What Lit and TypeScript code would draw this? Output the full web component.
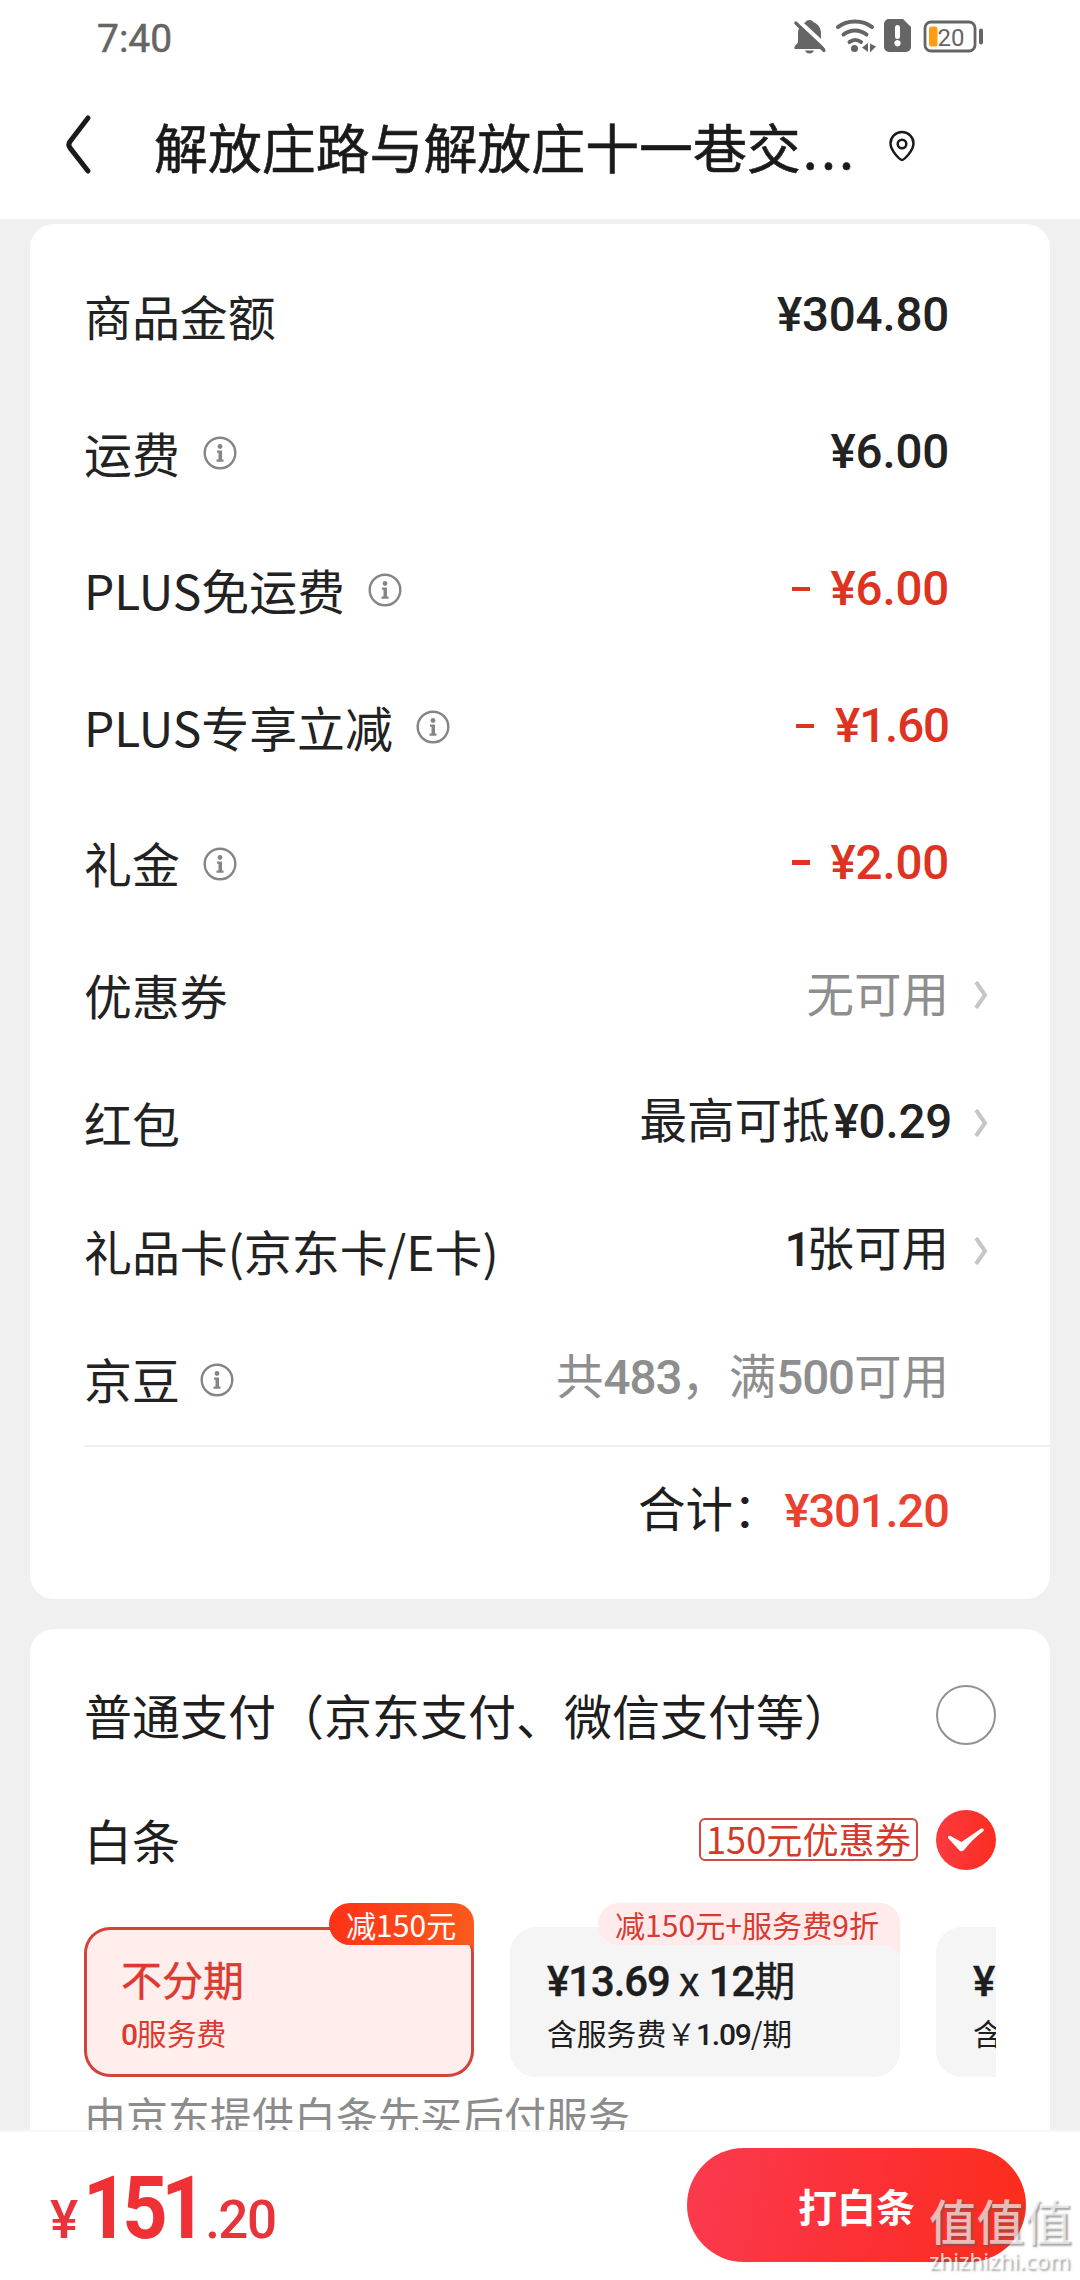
import { LitElement, html, css, svg, nothing, type TemplateResult } from "lit";
import { customElement, property } from "lit/decorators.js";

interface Row {
  label: string;
  info?: boolean;
  value: TemplateResult;
  tone?: string;
  arrow?: boolean;
}

const n = (text: string, fit = "") => html`<span class="num ${fit}">${text}</span>`;

const FEES: Row[] = [
  { label: "商品金额", value: n("¥304.80") },
  { label: "运费", info: true, value: n("¥6.00") },
  { label: "PLUS免运费", info: true, value: html`<span class="minus"></span>${n("¥6.00")}`, tone: "red" },
  { label: "PLUS专享立减", info: true, value: html`<span class="minus"></span>${n("¥1.60", "snug")}`, tone: "red" },
  { label: "礼金", info: true, value: html`<span class="minus"></span>${n("¥2.00")}`, tone: "red" },
];

const ASSETS: Row[] = [
  { label: "优惠券", value: html`无可用`, tone: "gray", arrow: true },
  { label: "红包", value: html`最高可抵${n("¥0.29", "hang")}`, arrow: true },
  { label: "礼品卡(京东卡/E卡)", value: html`${n("1", "tight")}张可用`, arrow: true },
  { label: "京豆", info: true, value: html`共${n("483", "snug")}，满${n("500", "snug")}可用`, tone: "gray" },
];

@customElement("status-bar")
class StatusBar extends LitElement {
  static styles = css`
    :host {
      display: flex;
      justify-content: space-between;
      height: 76px;
      padding: 0 96px 0 97px;
      color: #656565;
      font-family: Roboto, "Noto Sans", sans-serif;
    }
    .time { font-size: 39px; line-height: 78px; -webkit-text-stroke: 0.5px currentColor; }
    .icons { flex: none; margin-top: 17px; }
    .level { font-size: 24px; font-family: Roboto, sans-serif; }
  `;
  render() {
    return html`
      <div class="time">7:40</div>
      <svg class="icons" width="191" height="38" viewBox="793 17 191 38" fill="#656565">
        <path d="M805.500 22.300c.8-1.500 2.300-2.300 4-2.300s3.200.8 4 2.300c4.800 1.700 7.500 6 7.500 11.200V43l4 6H794.500v-2.500l3.500-4v-9c0-5.200 2.700-9.500 7.500-11.200z"/>
        <path d="M805 50.500h9c-.8 2-2.400 3-4.500 3s-3.700-1-4.500-3z"/>
        <path d="M793 16L830 50.500V40z" fill="none"/>
        <path d="M795 17.500L829 49" stroke="#fff" stroke-width="4"/>
        <path d="M795.800 23L824 50.500" stroke="#656565" stroke-width="3.200" stroke-linecap="round"/>
        <g fill="none" stroke="#656565" stroke-width="4" stroke-linecap="round">
          <path d="M838 27c9-7.500 25-7.500 34 0M843.500 34.500c7-5.500 16-5.500 23 0M849.500 42c3.500-2.800 8-2.800 11.500 0"/>
        </g>
        <circle cx="854.500" cy="48.500" r="3.500"/>
        <path d="M868 43v9l-6-4.500zM870 43.500v9l6-6z"/>
        <path fill-rule="evenodd" d="M889 19h14l8 8v20a5 5 0 0 1-5 5h-17a5 5 0 0 1-5-5v-23a5 5 0 0 1 5-5zM895 27.500v9a2.500 2.500 0 0 0 5 0v-9a2.500 2.500 0 0 0-5 0zM897.500 40a3.200 3.200 0 1 0 .01 0z"/>
        <rect x="925" y="22" width="50" height="29" rx="6" fill="none" stroke="#656565" stroke-width="2.800"/>
        <rect x="979" y="28.500" width="4" height="16" rx="2"/>
        <rect x="929" y="26.500" width="8.500" height="20" rx="2.500" fill="#ff9c14"/>
        <text class="level" x="937.500" y="46">20</text>
      </svg>
    `;
  }
}

@customElement("title-bar")
class TitleBar extends LitElement {
  static styles = css`
    :host {
      display: flex;
      align-items: center;
      height: 143px;
      padding-left: 64px;
      box-sizing: border-box;
      color: #1a1a1a;
      font-family: "Noto Sans CJK SC", sans-serif;
    }
    .back { margin-top: -6px; }
    .title { margin: -4px 0 0 62px; width: 698px; font-size: 53.9px; line-height: 80px; white-space: nowrap; -webkit-text-stroke: 0.6px currentColor; }
    .dots { letter-spacing: 3.200px; margin-left: 2px; }
    .pin { margin-top: -4px; margin-left: 36px; }
    .back, .pin { flex: none; }
  `;
  render() {
    return html`
      <svg class="back" width="28" height="62" viewBox="0 0 28 62" fill="none" stroke="#1a1a1a" stroke-width="5" stroke-linecap="round" stroke-linejoin="round">
        <path d="M24 4L6 27.500c-1.600 2.200-1.600 4.200 0 6.400L24 57"/>
      </svg>
      <div class="title">解放庄路与解放庄十一巷交<span class="dots">...</span></div>
      <svg class="pin" width="28" height="32" viewBox="0 0 28 32" fill="none" stroke="#1a1a1a" stroke-width="2.500">
        <path d="M14 30c-1.300 0-11.500-8.500-11.500-16.700a11.500 11.300 0 0 1 23 0C25.500 21.500 15.300 30 14 30z"/>
        <circle cx="14" cy="14" r="4.300"/>
      </svg>
    `;
  }
}

@customElement("bill-row")
class BillRow extends LitElement {
  @property({ attribute: false }) row!: Row;
  static styles = css`
    :host { display: flex; align-items: center; padding-right: 101px; color: #222; font-size: 47.500px; line-height: 64px; white-space: nowrap; }
    .label { font-size: 47.900px; padding-bottom: 2px; }
    .info { flex: none; margin: 1px 0 0 23px; }
    :host(.asset) .info { margin-left: 20px; }
    .value { margin-left: auto; padding-bottom: 5px; display: block; }
    :host(.asset) .value { padding-bottom: 6px; }
    .red { color: #de3320; }
    .gray { color: #8e8e8e; }
    .num { font-family: Roboto, sans-serif; font-weight: 500; font-size: 47.500px; letter-spacing: -0.2px; }
    .snug { letter-spacing: -1.100px; }
    .tight { letter-spacing: -5px; }
    .hang { margin: 0 -3px 0 4px; }
    .minus { display: inline-block; width: 18px; height: 4.500px; margin-right: 21px; background: currentColor; vertical-align: 14px; }
    .arrow { flex: none; margin: 0 -40px 0 24px; }
  `;
  render() {
    const r = this.row;
    return html`
      <span class="label">${r.label}</span>
      ${r.info
        ? html`<svg class="info" width="34" height="34" viewBox="0 0 34 34" fill="#858585">
            <circle cx="17" cy="17" r="15.300" fill="none" stroke="#858585" stroke-width="2.400"/>
            <circle cx="17" cy="10.500" r="2.400"/>
            <path d="M14 14.500h5v9H20.500v2.200h-7v-2.200h2v-6.700H14z"/>
          </svg>`
        : nothing}
      <span class="value ${r.tone ?? ""}">${r.value}</span>
      ${r.arrow
        ? html`<svg class="arrow" width="16" height="34" viewBox="0 0 16 34" fill="none" stroke="#c6c6c6" stroke-width="4">
            <path d="M3 4L12 17L3 30"/>
          </svg>`
        : nothing}
    `;
  }
}

@customElement("plan-card")
class PlanCard extends LitElement {
  @property({ type: Boolean, reflect: true }) selected = false;
  @property() tag = "";
  @property({ attribute: false }) heading!: TemplateResult;
  @property({ attribute: false }) note!: TemplateResult;
  static styles = css`
    :host {
      display: block;
      position: relative;
      flex: none;
      box-sizing: border-box;
      width: 390px;
      height: 150px;
      padding: 23px 0 0 37px;
      border-radius: 26px;
      background: #f5f5f5;
      color: #1e1e1e;
      white-space: nowrap;
    }
    :host([selected]) { background: #ffeeec; box-shadow: inset 0 0 0 3px #d0443e; color: #dc3a30; }
    .heading { font-size: 41px; line-height: 56px; height: 56px; -webkit-text-stroke: 0.4px currentColor; }
    .heading .num { font-family: Roboto, sans-serif; font-weight: 500; font-size: 41.800px; letter-spacing: -1px; }
    .note { font-size: 29.800px; line-height: 44px; margin-top: 4px; }
    .note .num { font-family: Roboto, sans-serif; font-weight: 500; font-size: 30px; letter-spacing: -1.200px; }
    .tag { position: absolute; right: 0; top: -24px; width: 145px; height: 56px; color: #fff; }
    .tag.wide { width: 302px; color: #d83a30; }
    .tag svg { position: absolute; inset: 0; }
    .text { position: relative; display: block; padding-left: 17px; font-size: 30.100px; line-height: 42px; }
  `;
  render() {
    const shape = this.selected
      ? svg`<defs><linearGradient id="g"><stop stop-color="#ff3217"/><stop offset="1" stop-color="#fb5a1c"/></linearGradient></defs>
          <path fill="url(#g)" d="M21 0H125A20 20 0 0 1 145 20V50C145 44 142 42 137 42H21A21 21 0 0 1 21 0Z"/>`
      : svg`<path fill="#ffebeb" d="M21 0H281A20 20 0 0 1 302 20V56C301 47 292 42 280 42H21A21 21 0 0 1 21 0Z"/>`;
    return html`
      ${this.tag
        ? html`<div class="tag ${this.selected ? "" : "wide"}">
            <svg width="100%" height="56">${shape}</svg><span class="text">${this.tag}</span>
          </div>`
        : nothing}
      <div class="heading">${this.heading}</div>
      <div class="note">${this.note}</div>
    `;
  }
}

@customElement("app-root")
class AppRoot extends LitElement {
  static styles = css`
    :host {
      display: flex;
      flex-direction: column;
      position: relative;
      width: 1080px;
      height: 2280px;
      overflow: hidden;
      background: #fff;
      font-family: "Noto Sans CJK SC", "Noto Sans", sans-serif;
    }
    .content { flex: 1; min-height: 0; overflow: hidden; background: #f0f0f0; padding: 5px 30px 0; }
    .card { background: #fff; border-radius: 24px; box-sizing: border-box; padding-left: 54px; }
    .bill { height: 1375px; padding-top: 23px; }
    .fee { height: 137px; }
    .fee.last { height: 136px; }
    .asset { height: 128px; }
    .total { display: flex; justify-content: flex-end; align-items: baseline; margin-top: 2px; border-top: 2px solid #efefef; padding: 28px 101px 0 0; font-size: 47.500px; line-height: 64px; color: #1e1e1e; }
    .sum { font-family: Roboto, sans-serif; font-weight: 500; font-size: 47px; letter-spacing: -1px; color: #ea4030; margin-left: 4px; }
    .pay { margin-top: 30px; height: 700px; padding-top: 23px; }
    .method { display: flex; align-items: center; height: 125px; padding-right: 54px; font-size: 48px; line-height: 64px; color: #1e1e1e; }
    .name { padding-bottom: 1px; }
    .check { flex: none; margin-left: auto; }
    .coupon { margin-left: auto; margin-right: 18px; box-sizing: border-box; height: 43px; padding: 0 5px; border: 2px solid #cf4a44; border-radius: 6px; color: #d43a2b; font-size: 36.200px; line-height: 37px; }
    .coupon + .check { margin-left: 0; }
    .plans { display: flex; gap: 36px; width: 912px; padding-top: 25px; overflow: hidden; }
    .provider { font-size: 42px; line-height: 60px; margin-top: 8px; color: #8c8c8c; }
    .footer { flex: none; display: flex; align-items: flex-start; justify-content: space-between; height: 150px; box-sizing: border-box; border-top: 2px solid #f7f7f7; padding: 16px 54px 0 50px; background: #fff; }
    .price { padding-top: 16px; color: #e6343a; font-family: Roboto, sans-serif; font-weight: 500; font-size: 53px; letter-spacing: -1.500px; line-height: 110px; white-space: nowrap; }
    .big { display: inline-block; line-height: 1; transform: scaleX(0.9); transform-origin: left; font-size: 88px; letter-spacing: -7px; font-weight: 700; color: #ef3135; margin: 0 -8px 0 6px; }
    .submit { display: flex; align-items: center; justify-content: center; width: 339px; height: 114px; border-radius: 57px; background: linear-gradient(100deg, #fb3a4e, #fc3035 55%, #fc2d1a); color: #fff; font-size: 39px; font-weight: 700; }
    .mark { position: absolute; left: 929px; top: 2191px; width: 146px; color: rgba(255, 255, 255, 0.68); text-shadow: 2px 2px 2px rgba(90, 90, 90, 0.55); white-space: nowrap; }
    .mark-name { font-size: 47.500px; line-height: 58px; font-weight: 500; }
    .mark-site { font-family: "Noto Sans", sans-serif; font-size: 22.300px; line-height: 24px; color: rgba(255, 255, 255, 0.8); }
  `;
  render() {
    return html`
      <status-bar></status-bar>
      <title-bar></title-bar>
      <main class="content">
        <section class="card bill">
          ${FEES.map((r, i) => html`<bill-row class="fee ${i === 4 ? "last" : ""}" .row=${r}></bill-row>`)}
          ${ASSETS.map((r) => html`<bill-row class="asset" .row=${r}></bill-row>`)}
          <div class="total"><span>合计：</span><span class="sum">¥301.20</span></div>
        </section>
        <section class="card pay">
          <div class="method">
            <span class="name">普通支付（京东支付、微信支付等）</span>
            <svg class="check" width="60" height="60"><circle cx="30" cy="30" r="29" fill="none" stroke="#929292" stroke-width="2"/></svg>
          </div>
          <div class="method">
            <span class="name">白条</span>
            <span class="coupon">150元优惠券</span>
            <svg class="check" width="60" height="60" viewBox="0 0 60 60">
              <defs><linearGradient id="c"><stop stop-color="#fc3a40"/><stop offset="1" stop-color="#fb2d20"/></linearGradient></defs>
              <circle cx="30" cy="30" r="30" fill="url(#c)"/>
              <path d="M12.500 28.500c-1.500-1.800.5-3.500 2.500-2.300L25.500 32 44.500 19c2.500-1.400 4.500.6 2.500 2.600C40 27 34 32.500 28.500 39.500c-1.800 2.300-4 2.300-5.500.5z" fill="#fff"/>
            </svg>
          </div>
          <div class="plans">
            <plan-card selected tag="减150元" .heading=${html`不分期`} .note=${html`${n("0")}服务费`}></plan-card>
            <plan-card tag="减150元+服务费9折" .heading=${html`${n("¥13.69")} x ${n("12")}期`} .note=${html`含服务费￥${n("1.09")}/期`}></plan-card>
            <plan-card .heading=${n("¥")} .note=${html`含`}></plan-card>
          </div>
          <div class="provider">由京东提供白条先买后付服务</div>
        </section>
      </main>
      <footer class="footer">
        <div class="price">¥<span class="big">151</span>.20</div>
        <div class="submit">打白条</div>
      </footer>
      <div class="mark">
        <div class="mark-name">值值值</div>
        <div class="mark-site">zhizhizhi.com</div>
      </div>
    `;
  }
}
